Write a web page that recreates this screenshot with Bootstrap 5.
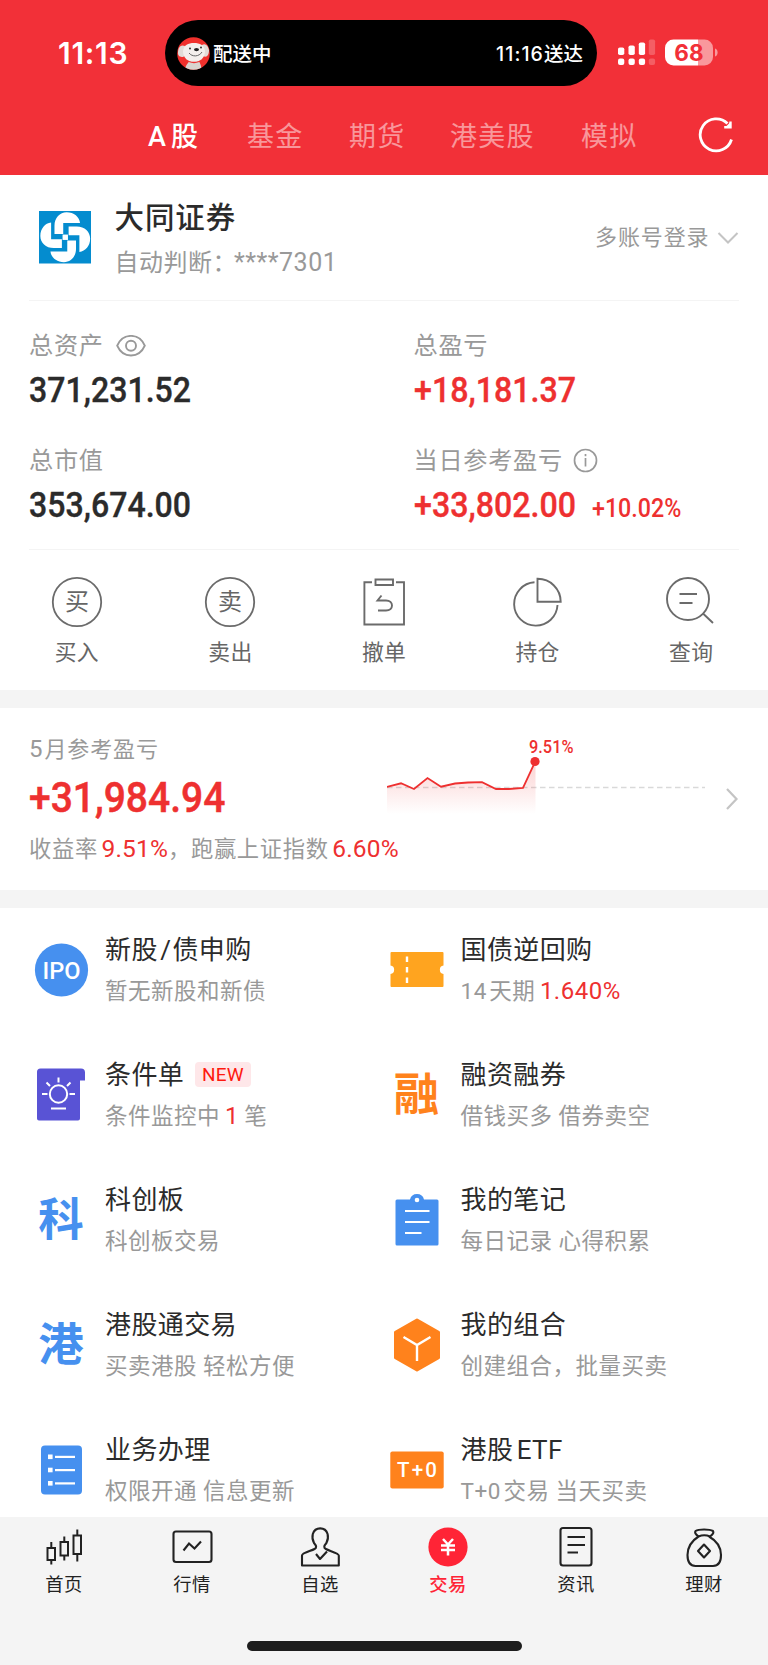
<!DOCTYPE html>
<html lang="zh-CN">
<head>
<meta charset="utf-8">
<meta name="viewport" content="width=device-width, initial-scale=1">
<title>交易</title>
<link href="https://cdn.jsdelivr.net/npm/bootstrap@5.3.0/dist/css/bootstrap.min.css" rel="stylesheet">
<script src="https://cdn.jsdelivr.net/npm/bootstrap@5.3.0/dist/js/bootstrap.bundle.min.js" defer></script>
<style>
  body{font-family:Roboto,"Noto Sans CJK SC",sans-serif;color:#2b2b2b;background:#fff;width:768px;height:1665px;overflow:hidden;-webkit-font-smoothing:antialiased}
  svg{display:block;flex:none}
  .text-up{color:#ee3030}
  .text-soft{color:#999}
  .ios{font-family:Inter,"Noto Sans CJK SC",sans-serif}
  .top-area{height:174.5px;background:#f23038;color:#fff}
  .status-row{height:106px}
  .clock{width:165px;padding-left:58px;font-size:30px;font-weight:600;letter-spacing:.7px}
  .island{width:432px;height:66px;margin-top:20px;border-radius:33px;background:#000;padding:0 14px 0 12px;font-size:19.5px;font-weight:500}
  .island span{line-height:30px}
  .island>span{padding-top:2px}
  .status-icons{padding-left:21px}
  .tabs{height:68px;font-size:27px;letter-spacing:1.2px;color:rgba(255,255,255,.5)}
  .tabs span{line-height:40px;margin-top:11px;white-space:nowrap}
  .tabs .on{color:#fff;font-weight:500;letter-spacing:0;word-spacing:-1.5px}
  .sheet{padding:0 29px}
  .account{height:126px;border-bottom:1.5px solid #f4f4f4}
  .acc-name{font-size:29.5px;line-height:40px;font-weight:500;letter-spacing:.9px}
  .acc-sub{font-size:24px;line-height:34px;letter-spacing:.5px}
  .acc-more{font-size:22px;letter-spacing:.9px;padding-top:1px}
  .assets{height:249.5px;border-bottom:1.5px solid #f4f4f4}
  .asset-label{height:34px;font-size:24.2px;line-height:34px;letter-spacing:.7px}
  .asset-val{height:44px;line-height:44px;font-size:35px;font-weight:500;margin-top:6px;-webkit-text-stroke:.35px currentColor}
  .asset-gap{margin-top:30.5px}
  .narrow{display:inline-block;transform-origin:0 50%;white-space:nowrap}
  .actions{height:140px;color:#666}
  .actions a{color:#666;text-decoration:none;width:20%}
  .actions .cap-txt{font-size:21.8px;line-height:32px;letter-spacing:.3px}
  .actions svg{margin-top:25px}
  .strip{height:18px;background:#f4f4f4}
  .month{height:182px}
  .month-label{font-size:22px;line-height:32px;letter-spacing:.9px}
  .month-val{font-size:43px;line-height:54px;font-weight:500;height:54px;-webkit-text-stroke:.5px currentColor}
  .month-sub{font-size:22.3px;line-height:34px;letter-spacing:.65px;white-space:nowrap}
  .month-sub b{font-size:24.5px;font-weight:400;letter-spacing:.15px;margin-left:-2.5px}
  .tools{height:609px;overflow:hidden;display:grid;grid-template-columns:355.5px 1fr;grid-auto-rows:125px;padding-left:33px}
  .tool{display:flex}
  .tool-icon{width:56px;height:56px;margin-top:34px;display:flex;align-items:center;justify-content:center;flex:none}
  .tool-body{margin-left:16px;padding-top:23px;white-space:nowrap}
  .tool-title{font-size:26px;line-height:38px;height:38px;letter-spacing:.4px}
  .tool-sub{font-size:22.5px;line-height:34px;height:34px;margin-top:4.6px;letter-spacing:.5px;color:#999}
  .tight{word-spacing:-3.5px}
  .glyph{font-family:"Noto Sans CJK SC",sans-serif;font-weight:700;font-size:45.5px;line-height:56px;padding-bottom:8px}
  .new-tag{font-size:19px;line-height:25px;height:25px;width:55.5px;text-align:center;color:#fe1a10;background:#fee7e9;border-radius:4px;letter-spacing:.2px;margin:-2px 0 0 11px}
  .dock{height:148px;background:#f4f4f4}
  .dock a{width:128px;color:#222;text-decoration:none;font-size:18.3px;letter-spacing:.4px;line-height:20px}
  .dock a.on{color:#ff2436;font-weight:500}
  .dock-icon{height:56px;margin-top:2px}
  .home-bar{width:275px;height:9.5px;border-radius:5px;background:#1d1d1d;margin-top:46px}
</style>
</head>
<body>
<header class="top-area">
  <div class="status-row d-flex ios">
    <div class="clock d-flex align-items-center">11:13</div>
    <div class="island d-flex align-items-center">
      <svg width="33" height="33" viewBox="0 0 33 33">
        <defs><clipPath id="face"><circle cx="16.5" cy="16.5" r="16.3"/></clipPath></defs>
        <g clip-path="url(#face)">
          <rect width="33" height="33" fill="#f0302c"/>
          <path d="M8 33c0-4 3-7 4.500-9h9c2 2 3 6 3 9z" fill="#d9d4cf"/>
          <path d="M1 16C1 10 4 7 8 9l3 8-5 3C3 20 1 19 1 16zM32 13c-1-5-4-7-7-5l-3 6 4 5c4 2 6-1 6-6z" fill="#e2dcd7"/>
          <path d="M6 14C7 8 11 6 17 6s10 2 11 8c0 7-5 11-11 11S6 21 6 14z" fill="#f3efec"/>
          <ellipse cx="19.500" cy="12.600" rx="2.500" ry="1.600" fill="#222"/>
          <circle cx="13" cy="11.500" r=".9" fill="#222"/><circle cx="24" cy="10.500" r=".9" fill="#222"/>
          <path d="M12 16c3 4 10 4 13-1" fill="none" stroke="#666" stroke-width="1"/>
          <path d="M12 24.500q5 2 10 0" fill="none" stroke="#e33" stroke-width="1.300"/>
        </g>
      </svg>
      <span style="margin-left:3px">配送中</span>
      <span class="ms-auto"><span style="letter-spacing:1.100px">11:16</span>送达</span>
    </div>
    <div class="status-icons d-flex align-items-center">
      <svg width="105" height="30" viewBox="618 37.500 105 30">
        <g fill="#fff">
          <rect x="618" y="47" width="6.300" height="7.500" rx="1.800"/><rect x="628.500" y="45" width="6.300" height="9.500" rx="1.800"/><rect x="638.800" y="42" width="6.300" height="12.500" rx="1.800"/>
          <rect x="618" y="58" width="6.300" height="6.500" rx="2"/><rect x="628.500" y="58" width="6.300" height="6.500" rx="2"/><rect x="638.800" y="58" width="6.300" height="6.500" rx="2"/>
          <g opacity=".22"><rect x="648.800" y="39" width="6.300" height="15.500" rx="1.800"/><rect x="648.800" y="58" width="6.300" height="6.500" rx="2"/></g>
          <path d="M698 39h6.500a8.500 8.500 0 0 1 8.500 8.500v9a8.500 8.500 0 0 1-8.500 8.500H698z" opacity=".5"/>
          <path d="M673.500 39H698v26h-24.500a8.500 8.500 0 0 1-8.500-8.500v-9a8.500 8.500 0 0 1 8.500-8.500z"/>
          <path d="M715 48c3.500 1 3.500 7 0 8z" opacity=".5"/>
        </g>
        <text x="689" y="60" text-anchor="middle" font-size="22.500" font-weight="700" fill="#f23038">68</text>
      </svg>
    </div>
  </div>
  <nav class="tabs d-flex">
    <span class="on" style="margin-left:148px;width:99px">A 股</span>
    <span style="width:102px">基金</span>
    <span style="width:101px">期货</span>
    <span style="width:131px">港美股</span>
    <span style="width:117px">模拟</span>
    <svg style="margin-top:9px" width="38" height="40" viewBox="698 115 38 40" fill="none" stroke="#fff" stroke-width="2.800">
      <path d="M731.500 139.500A16 16 0 1 1 727.500 123.500"/><path d="M730.500 121.500v5.700H724.200" stroke-width="2.400"/><path d="M730.500 122v5h-5z" fill="#fff" stroke="none"/>
    </svg>
  </nav>
</header>

<main>
  <section class="sheet bg-white">
    <div class="account d-flex">
      <svg style="margin:36.5px 0 0 9.500px" width="52.500" height="52.500" viewBox="0 0 156 156">
        <rect width="156" height="156" fill="#048ccf"/>
        <g fill="#fff">
          <path d="M46 68V44C46 20 62 4 82 4c22 0 38 14 40 32H72v32z"/>
          <path d="M88 46h24c24 0 40 16 40 36 0 22-14 38-32 40V72H88z"/>
          <path d="M110 88v24c0 24-16 40-36 40-22 0-38-14-40-32h50V88z"/>
          <path d="M68 110H44C20 110 4 94 4 74c0-22 14-38 32-40v50h32z"/>
          <rect x="70" y="70" width="16" height="16"/>
        </g>
      </svg>
      <div style="margin:23px 0 0 23.500px">
        <div class="acc-name">大同证券</div>
        <div class="acc-sub text-soft" style="margin-top:8px">自动判断：<span style="font-size:25px;margin-left:-3px">****7301</span></div>
      </div>
      <div class="acc-more text-soft d-flex align-items-center ms-auto">多账号登录
        <svg style="margin-left:7.500px" width="22" height="14" viewBox="0 0 22 14" fill="none" stroke="#c4c4c4" stroke-width="2"><path d="M1.500 2l9.500 9.500L20.500 2"/></svg>
      </div>
    </div>
    <div class="assets row g-0" style="padding-top:28.5px">
      <div class="col-auto" style="width:384.500px">
        <div class="asset-label text-soft d-flex align-items-center">总资产
          <svg style="margin-left:12px" width="30" height="23" viewBox="0 .8 30 23" fill="none" stroke="#999" stroke-width="1.900"><path d="M1.200 11.500C4 5 9 1.700 15 1.700S26 5 28.800 11.500C26 18 21 21.300 15 21.300S4 18 1.200 11.500z"/><circle cx="15" cy="11.500" r="5"/></svg>
        </div>
        <div class="asset-val"><span class="narrow" style="transform:scaleX(.917)">371,231.52</span></div>
        <div class="asset-label asset-gap text-soft">总市值</div>
        <div class="asset-val"><span class="narrow" style="transform:scaleX(.917)">353,674.00</span></div>
      </div>
      <div class="col">
        <div class="asset-label text-soft">总盈亏</div>
        <div class="asset-val text-up"><span class="narrow" style="transform:scaleX(.92)">+18,181.37</span></div>
        <div class="asset-label asset-gap text-soft d-flex align-items-center">当日参考盈亏
          <svg style="margin-left:10.500px" width="25" height="25" viewBox="0 0 25 25" fill="none" stroke="#999" stroke-width="1.700"><circle cx="12.500" cy="12.500" r="11"/><path d="M12.500 10v8.500"/><path d="M12.500 6v2.200"/></svg>
        </div>
        <div class="asset-val text-up d-flex"><span class="narrow" style="width:178.500px;transform:scaleX(.92)">+33,802.00</span><span class="narrow" style="font-size:25px;padding-top:3.500px;-webkit-text-stroke:0;transform:scaleX(.93)">+10.02%</span></div>
      </div>
    </div>
  </section>

  <nav class="actions d-flex">
    <a href="#" class="d-flex flex-column align-items-center">
      <svg width="54" height="54" viewBox="-27 -27 54 54"><circle r="24.200" fill="none" stroke="#6b6b6b" stroke-width="1.800"/><text y="8" text-anchor="middle" font-size="24" fill="#666">买</text></svg>
      <span class="cap-txt mt-2">买入</span></a>
    <a href="#" class="d-flex flex-column align-items-center">
      <svg width="54" height="54" viewBox="-27 -27 54 54"><circle r="24.200" fill="none" stroke="#6b6b6b" stroke-width="1.800"/><text y="8" text-anchor="middle" font-size="24" fill="#666">卖</text></svg>
      <span class="cap-txt mt-2">卖出</span></a>
    <a href="#" class="d-flex flex-column align-items-center">
      <svg width="54" height="54" viewBox="357 575 54 54" fill="none" stroke="#6b6b6b" stroke-width="1.900"><path d="M372 582.300h-7.600v42.200h39.600v-42.200H396M375.500 579.500h17.500v5.500h-17.500zM381.500 595.500l-4 5h8.500c8 0 8 10 0 10h-8"/></svg>
      <span class="cap-txt mt-2">撤单</span></a>
    <a href="#" class="d-flex flex-column align-items-center">
      <svg width="54" height="54" viewBox="511 575 54 54" fill="none" stroke="#6b6b6b" stroke-width="1.900"><path d="M534.500 582.300A21.700 21.700 0 1 0 557.500 605M537.500 578.800v23h23.200a23 23 0 0 0-23.200-23z"/></svg>
      <span class="cap-txt mt-2">持仓</span></a>
    <a href="#" class="d-flex flex-column align-items-center">
      <svg width="54" height="54" viewBox="664 575 54 54" fill="none" stroke="#6b6b6b" stroke-width="1.900"><circle cx="688" cy="599" r="21"/><path d="M703 613.500l10 9.500M679.500 594h17.500M679.500 603h13"/></svg>
      <span class="cap-txt mt-2">查询</span></a>
  </nav>
  <div class="strip"></div>

  <section class="month sheet d-flex">
    <div style="width:358px">
      <div class="month-label text-soft" style="margin-top:25px"><span style="font-size:24px;margin-right:1px">5</span>月参考盈亏</div>
      <div class="month-val text-up" style="margin-top:4px"><span class="narrow" style="transform:scaleX(.907)">+31,984.94</span></div>
      <div class="month-sub text-soft" style="margin-top:8px">收益率 <b class="text-up">9.51%</b>，跑赢上证指数 <b class="text-up">6.60%</b></div>
    </div>
    <svg style="margin-top:22px" width="340" height="90" viewBox="387 730 340 90">
      <defs><linearGradient id="fade" x1="0" y1="0" x2="0" y2="1"><stop offset="0" stop-color="#ee3030" stop-opacity=".22"/><stop offset="1" stop-color="#ee3030" stop-opacity="0"/></linearGradient></defs>
      <path d="M387 787.500H705" stroke="#d9d9d9" stroke-width="1.500" stroke-dasharray="5.500 3.500"/>
      <path d="M387 787l14-3.700 13 5.700 13.500-11 13.500 8.700 14-3.200 13-1 14-.3 14 6.800h13l14-1 12.500-27V814H387z" fill="url(#fade)"/>
      <path d="M387 787l14-3.700 13 5.700 13.500-11 13.500 8.700 14-3.200 13-1 14-.3 14 6.800h13l14-1 12.500-27" fill="none" stroke="#ee3030" stroke-width="1.800"/>
      <circle cx="535" cy="761.500" r="4.600" fill="#ee3030"/>
      <text x="529" y="752.500" font-size="18" font-weight="500" fill="#ee3030" textLength="44.500" lengthAdjust="spacingAndGlyphs">9.51%</text>
    </svg>
    <svg style="margin:79px 0 0 -2px" width="14" height="24" viewBox="0 0 14 24" fill="none" stroke="#c4c4c4" stroke-width="2.200"><path d="M2 2l9.500 10L2 22"/></svg>
  </section>
  <div class="strip"></div>

  <section class="tools">
    <div class="tool">
      <div class="tool-icon"><svg width="56" height="56" viewBox="-28.500 -28 56 56"><circle r="26.600" fill="#4690ef"/><text x="0" y="9" text-anchor="middle" font-size="24" font-weight="500" fill="#fff" textLength="38" lengthAdjust="spacingAndGlyphs">IPO</text></svg></div>
      <div class="tool-body"><div class="tool-title">新股<span style="margin:0 1px 0 2.500px">/</span>债申购</div><div class="tool-sub">暂无新股和新债</div></div>
    </div>
    <div class="tool">
      <div class="tool-icon"><svg width="54" height="36" viewBox="0 0 54 36"><path d="M1.500 0h51a1 1 0 0 1 1 1v12.500a4.300 4.300 0 0 0 0 8.500v12a1 1 0 0 1-1 1h-51a1 1 0 0 1-1-1V22a4.300 4.300 0 0 0 0-8.500V1a1 1 0 0 1 1-1z" fill="#ffa41f"/><path d="M17 4.500v27" stroke="#fff" stroke-width="2.400" stroke-dasharray="5.500 5"/></svg></div>
      <div class="tool-body"><div class="tool-title">国债逆回购</div><div class="tool-sub"><span class="tight">14 天期</span><span class="text-up" style="font-size:24px;margin-left:4.500px">1.640%</span></div></div>
    </div>

    <div class="tool">
      <div class="tool-icon"><svg width="50" height="54" viewBox="0 .5 50 54"><path d="M4.500 1H45a4 4 0 0 1 4 4v8h-5v38a2 2 0 0 1-2 2H3a2 2 0 0 1-2-2V4.500A3.500 3.500 0 0 1 4.500 1z" fill="#5953d5"/><g fill="none" stroke="#fff" stroke-width="2"><circle cx="22.500" cy="26.500" r="8.700"/><path d="M22.500 10v5M10.500 15l3.500 3.500M34.500 15L31 18.500M6 26.500h5.500M33.500 26.500H39M15 41h15"/></g></svg></div>
      <div class="tool-body"><div class="tool-title d-flex align-items-center">条件单<span class="new-tag">NEW</span></div><div class="tool-sub" style="word-spacing:-1px">条件监控中 <span class="text-up" style="font-size:24px">1</span> 笔</div></div>
    </div>
    <div class="tool">
      <div class="tool-icon glyph" style="color:#ff821c">融</div>
      <div class="tool-body"><div class="tool-title">融资融券</div><div class="tool-sub">借钱买多 借券卖空</div></div>
    </div>

    <div class="tool">
      <div class="tool-icon glyph" style="color:#4690ef">科</div>
      <div class="tool-body"><div class="tool-title">科创板</div><div class="tool-sub">科创板交易</div></div>
    </div>
    <div class="tool">
      <div class="tool-icon"><svg width="44" height="56" viewBox="0 .5 44 56"><path d="M2 8h13a7.200 7.200 0 0 1 14 0h13a1.500 1.500 0 0 1 1.500 1.500v43A1.500 1.500 0 0 1 42 54H2a1.500 1.500 0 0 1-1.500-1.500v-43A1.500 1.500 0 0 1 2 8z" fill="#4690ef"/><circle cx="22" cy="8.500" r="2.300" fill="#fff"/><path d="M10 19.500h24.500M10 30.500h24.500M10 41.500h16.500" stroke="#fff" stroke-width="2.200"/></svg></div>
      <div class="tool-body"><div class="tool-title">我的笔记</div><div class="tool-sub">每日记录 心得积累</div></div>
    </div>

    <div class="tool">
      <div class="tool-icon glyph" style="color:#4690ef">港</div>
      <div class="tool-body"><div class="tool-title">港股通交易</div><div class="tool-sub">买卖港股 轻松方便</div></div>
    </div>
    <div class="tool">
      <div class="tool-icon"><svg width="48" height="54" viewBox="0 0 48 54"><path d="M24 2l21.500 12.300v25.400L24 52 2.500 39.700V14.300z" fill="#ff821c" stroke="#ff821c" stroke-width="3" stroke-linejoin="round"/><path d="M10.500 19L24 27l13.500-8M24 27v16" fill="none" stroke="#fff" stroke-width="2.400"/></svg></div>
      <div class="tool-body"><div class="tool-title">我的组合</div><div class="tool-sub">创建组合，批量买卖</div></div>
    </div>

    <div class="tool">
      <div class="tool-icon"><svg width="42" height="50" viewBox="-.5 0 42 50"><rect x=".5" y=".5" width="41" height="49" rx="4" fill="#4690ef"/><g fill="#fff"><rect x="7.500" y="9.500" width="4.600" height="4.600"/><rect x="7.500" y="22.700" width="4.600" height="4.600"/><rect x="7.500" y="36" width="4.600" height="4.600"/><rect x="14.500" y="10.800" width="20" height="2.200"/><rect x="14.500" y="24" width="20" height="2.200"/><rect x="14.500" y="37.300" width="20" height="2.200"/></g></svg></div>
      <div class="tool-body"><div class="tool-title">业务办理</div><div class="tool-sub">权限开通 信息更新</div></div>
    </div>
    <div class="tool">
      <div class="tool-icon"><svg width="54" height="38" viewBox="0 0 54 38"><rect x=".3" y=".5" width="53.400" height="37" rx="2" fill="#ff821c"/><text x="7" y="26" font-size="20.500" font-weight="500" fill="#fff" textLength="40" lengthAdjust="spacing">T+0</text></svg></div>
      <div class="tool-body"><div class="tool-title tight">港股 ETF</div><div class="tool-sub"><span class="tight">T+0 交易</span> 当天买卖</div></div>
    </div>
  </section>
</main>

<footer class="dock d-flex flex-column align-items-center">
  <nav class="d-flex">
    <a href="#" class="d-flex flex-column align-items-center"><span class="dock-icon"><svg width="42" height="56" viewBox="43 1519 42 56" fill="none" stroke="#222" stroke-width="2"><path d="M47.500 1548h7.500v12h-7.500zM51.300 1542v6M51.300 1560v4.500M60.500 1542h7.500v13.500h-7.500zM64.300 1536.500v5.500M64.300 1555.500v5M73.500 1535.500h7.500V1554h-7.500zM77.300 1529.500v6M77.300 1554v7.500"/></svg></span>首页</a>
    <a href="#" class="d-flex flex-column align-items-center"><span class="dock-icon"><svg width="42" height="56" viewBox="171 1519 42 56" fill="none" stroke="#222" stroke-width="2.100"><rect x="173.500" y="1531.500" width="38" height="30.500" rx="2.500"/><path d="M183.500 1550.500l5.500-7 5.500 5 6.500-7"/></svg></span>行情</a>
    <a href="#" class="d-flex flex-column align-items-center"><span class="dock-icon"><svg width="42" height="56" viewBox="299 1519 42 56" fill="none" stroke="#222" stroke-width="2.100" stroke-linejoin="round"><path d="M302 1565.500v-10c0-2.500 9-4.500 12.500-6.500 2.500-1.500 2-3-.5-6-1.500-3-2-6-1.200-9 2.400-7.500 12.400-7.500 14.800 0 .8 3 .3 6-1.200 9-2.500 3-3 4.500-.5 6 3.500 2 12.900 4 12.900 6.500v10z"/><path d="M316 1554l4 5 7-7.500"/></svg></span>自选</a>
    <a href="#" class="on d-flex flex-column align-items-center"><span class="dock-icon"><svg width="42" height="56" viewBox="427 1519 42 56" fill="none" stroke="#fff" stroke-width="2.500"><circle cx="448" cy="1547" r="19.600" fill="#ff2436" stroke="none"/><path d="M443 1539l5 5.500 5-5.500M441 1545.500h14M441 1550h14M448 1545.500v10"/></svg></span>交易</a>
    <a href="#" class="d-flex flex-column align-items-center"><span class="dock-icon"><svg width="42" height="56" viewBox="555 1519 42 56" fill="none" stroke="#222" stroke-width="2.100"><rect x="560.500" y="1528" width="31" height="37.500" rx="2.500"/><path d="M567.500 1537h17.500M567.500 1545h17.500M567.500 1552.500h10.500"/></svg></span>资讯</a>
    <a href="#" class="d-flex flex-column align-items-center"><span class="dock-icon"><svg width="42" height="56" viewBox="683 1519 42 56" fill="none" stroke="#222" stroke-width="2.100" stroke-linejoin="round"><path d="M698.500 1536.500c-3.500-2.500-4-4-3-5.500 3-2 14-2 17.500 0 1 1.500.5 3-3 5.500M698.500 1536.500c3.500-1.600 8-1.600 11.500 0M698.500 1536.500c-7 4.500-11 10-11 18.500 0 8 3 11 8 11h17.500c5 0 8-3 8-11 0-8.500-4-14-12-18.500"/><path d="M704 1544.500l6 6.500-6 6.500-6-6.500z"/></svg></span>理财</a>
  </nav>
  <div class="home-bar"></div>
</footer>
</body>
</html>
